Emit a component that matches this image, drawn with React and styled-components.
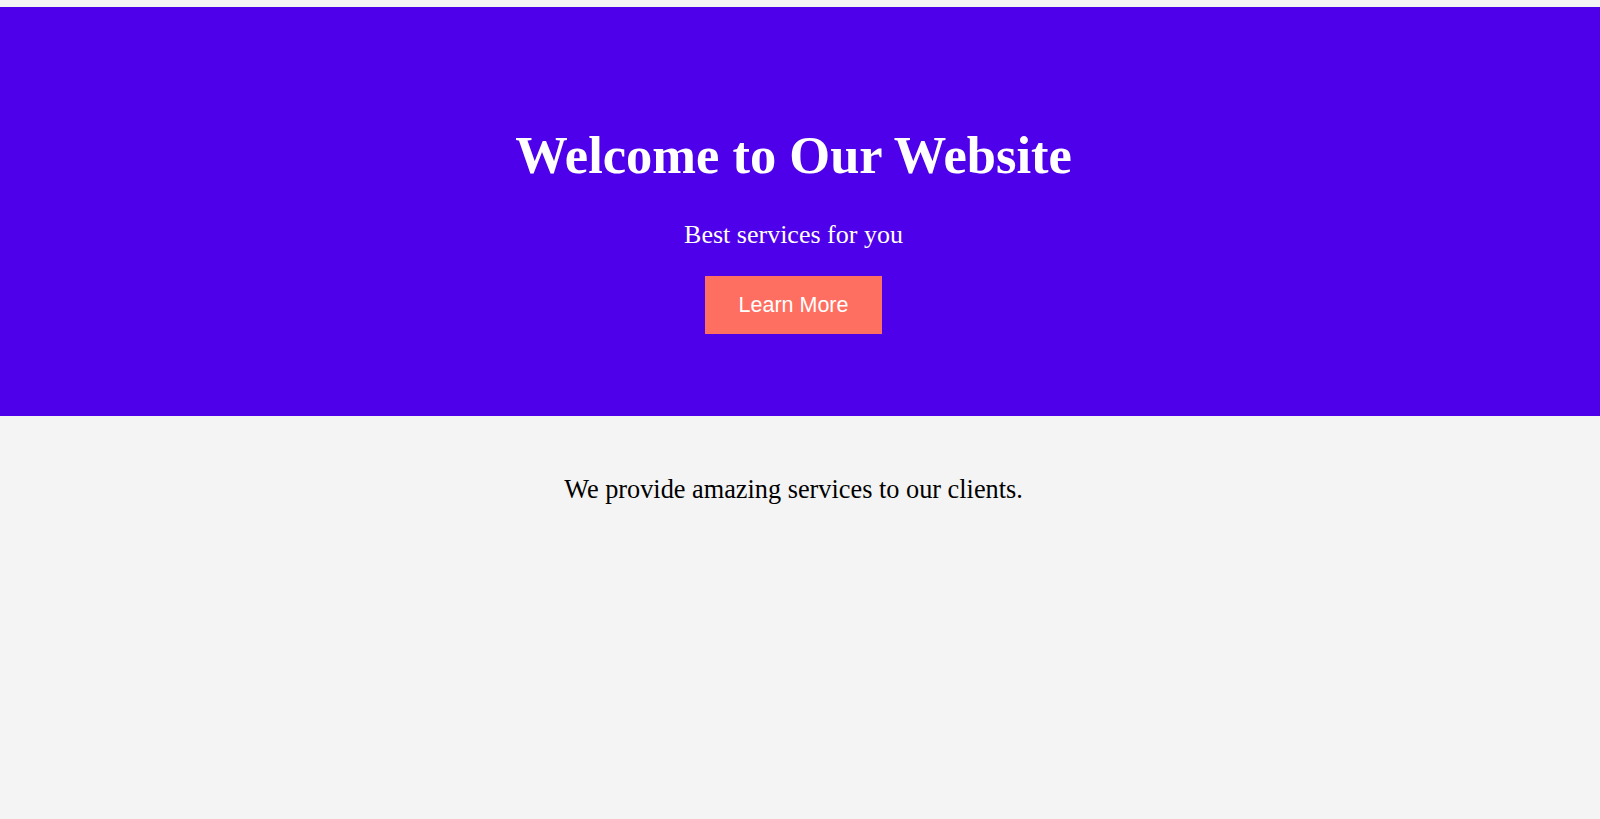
import React from "react";
import styled, { createGlobalStyle } from "styled-components";

const GlobalStyle = createGlobalStyle`
  html, body {
    margin: 0;
    padding: 0;
    background: #f4f4f4;
  }
  body {
    font-family: "Liberation Serif", "Times New Roman", serif;
  }
`;

const Page = styled.div`
  min-height: 819px;
  padding-top: 7px;
  box-sizing: border-box;
  background: #f4f4f4;
`;

const Hero = styled.header`
  background: #4f00ea;
  color: #fff;
  text-align: center;
  padding: 118px 13px 82px 0;
  display: flex;
  flex-direction: column;
  align-items: center;
`;

const Title = styled.h1`
  margin: 0;
  font-size: 52.5px;
  font-weight: bold;
`;

const Subtitle = styled.p`
  margin: 35px 0 26px;
  font-size: 26px;
`;

const Button = styled.button`
  background: #ff6f61;
  color: #fff;
  border: none;
  border-radius: 0;
  padding: 16.5px 34px;
  font-family: "Liberation Sans", Arial, sans-serif;
  font-size: 21.5px;
  cursor: pointer;
`;

const Content = styled.section`
  padding: 59px 13px 0 0;
  text-align: center;
`;

const Text = styled.p`
  margin: 0;
  font-size: 26.3px;
  color: #000;
`;

// simple landing page
const App = () => (
  <Page>
    <GlobalStyle />
    <Hero>
      <Title>Welcome to Our Website</Title>
      <Subtitle>Best services for you</Subtitle>
      <Button>Learn More</Button>
    </Hero>
    <Content>
      <Text>We provide amazing services to our clients.</Text>
    </Content>
  </Page>
);

export default App;
